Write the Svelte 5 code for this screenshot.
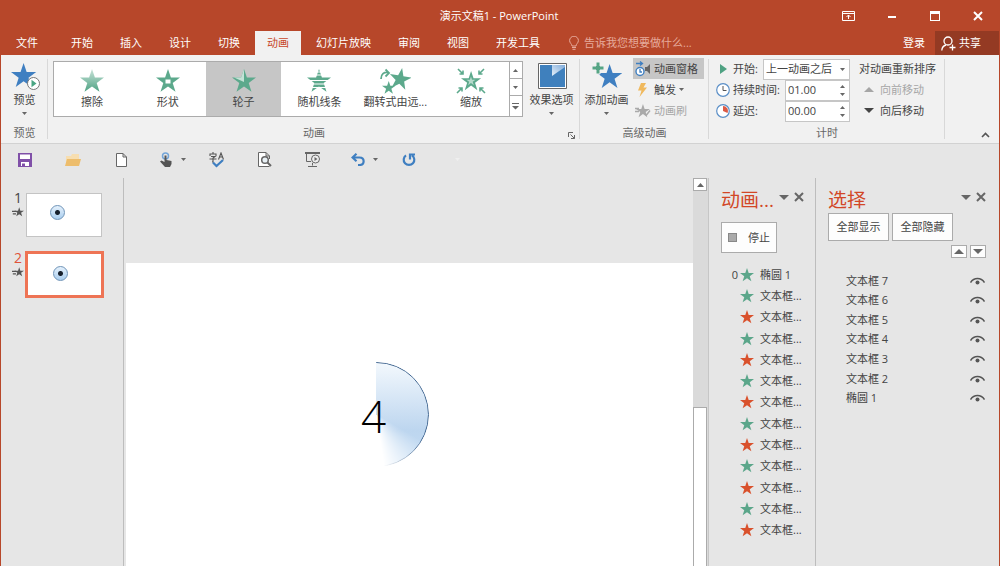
<script>
  const STAR = 'M12 0l2.9 8.6H24l-7.3 5.4 2.8 8.8L12 17.4 4.5 22.8 7.3 14 0 8.6h9.1z';

  const tabs = ['开始', '插入', '设计', '切换', '动画', '幻灯片放映', '审阅', '视图', '开发工具'];
  let activeTab = $state('动画');

  const effects = [
    { id: 'wipe', label: '擦除' },
    { id: 'shape', label: '形状' },
    { id: 'wheel', label: '轮子' },
    { id: 'bars', label: '随机线条' },
    { id: 'spin', label: '翻转式由远...' },
    { id: 'zoom', label: '缩放' }
  ];
  let effect = $state('wheel');

  let start = $state('上一动画之后');
  let duration = $state('01.00');
  let delay = $state('00.00');

  const slides = [1, 2];
  let activeSlide = $state(2);

  const timeline = [
    { order: '0', name: '椭圆 1', exit: false },
    ...Array.from({ length: 12 }, (_, i) => ({ order: '', name: '文本框...', exit: i % 2 === 1 }))
  ];

  const objects = ['文本框 7', '文本框 6', '文本框 5', '文本框 4', '文本框 3', '文本框 2', '椭圆 1'];
</script>

{#snippet star(size)}
  <svg width={size} height={size} viewBox="0 0 24 24" fill="currentColor" aria-hidden="true"><path d={STAR} /></svg>
{/snippet}

{#snippet caret(up = false)}
  <svg class="caret" width="5" height="3" viewBox="0 0 5 3" aria-hidden="true"><path d={up ? 'M0 3L2.5 0 5 3z' : 'M0 0h5L2.5 3z'} fill="#666" /></svg>
{/snippet}

{#snippet bigCaret(up = false)}
  <svg width="10" height="5" viewBox="0 0 10 5" aria-hidden="true"><path d={up ? 'M0 5L5 0l5 5z' : 'M0 0h10L5 5z'} fill="currentColor" /></svg>
{/snippet}

{#snippet cross()}
  <svg width="10" height="10" viewBox="0 0 10 10" fill="none" stroke="currentColor" stroke-width="2" aria-hidden="true"><path d="M1 1l8 8M9 1L1 9" /></svg>
{/snippet}

<div class="window">
  <header>
    <div class="titlebar">
      <h1>演示文稿1 - PowerPoint</h1>
      <div class="window-controls">
        <button aria-label="功能区显示选项">
          <svg width="13" height="10" viewBox="0 0 13 10" fill="none" stroke="#fff"><path d="M.5.5h12v9H.5zM.5 2.5h12M6.5 8V4M4.5 6l2-2 2 2" /></svg>
        </button>
        <button aria-label="最小化">
          <svg width="10" height="10" viewBox="0 0 10 10"><path d="M1 5h8v2H1z" fill="#fff" /></svg>
        </button>
        <button aria-label="最大化">
          <svg width="10" height="10" viewBox="0 0 10 10"><path d="M0 0h10v10H0zM1 3v6h8V3z" fill="#fff" fill-rule="evenodd" /></svg>
        </button>
        <button aria-label="关闭">{@render cross()}</button>
      </div>
    </div>

    <nav>
      <button class="tab file">文件</button>
      {#each tabs as tab}
        <button class="tab" class:active={tab === activeTab} onclick={() => (activeTab = tab)}>{tab}</button>
      {/each}
      <button class="tell-me">
        <svg width="10" height="14" viewBox="0 0 10 14" fill="none" stroke="currentColor"><path d="M3 10c0-2-2.4-3-2.4-5.400a4.400 4.400 0 0 1 8.800 0C9.400 7 7 8 7 10zM3 11.500h4M3.500 13.300h3" /></svg>
        告诉我您想要做什么...
      </button>
      <button class="login">登录</button>
      <button class="share">
        <svg width="15" height="15" viewBox="0 0 15 15" fill="none" stroke="#fff" stroke-width="1.300"><circle cx="7" cy="5" r="4" /><path d="M.8 14.500C1 11.500 2.600 9.600 5 9M8.500 11.500h6M11.500 8.500v6" /></svg>
        共享
      </button>
    </nav>
  </header>

  <section class="ribbon">
    <div class="group preview">
      <div class="group-body">
        <button class="big">
          <svg width="30" height="28" viewBox="0 0 30 28">
            <path d={STAR} fill="#3f7fc1" transform="translate(1 1) scale(1.050)" />
            <circle cx="23.500" cy="21.500" r="6" fill="#fff" stroke="#777" />
            <path d="M21.500 17.800v7.400l5-3.700z" fill="#4aa583" />
          </svg>
          <span>预览</span>
          {@render caret()}
        </button>
      </div>
      <div class="group-title">预览</div>
    </div>

    <div class="group animation">
      <div class="group-body">
        <div class="gallery">
          {#each effects as item}
            <button class="effect" class:selected={item.id === effect} onclick={() => (effect = item.id)}>
              <svg width="32" height="26" viewBox="0 0 32 26" fill="#5ca98c">
                {#if item.id === 'wipe'}
                  <defs>
                    <linearGradient id="wipe-fill" x2="0" y2="1">
                      <stop stop-color="#c9e3d9" />
                      <stop offset="1" stop-color="#4ea283" />
                    </linearGradient>
                  </defs>
                  <path d={STAR} fill="url(#wipe-fill)" transform="translate(4 1)" />
                {:else if item.id === 'shape'}
                  <path d={STAR} transform="translate(4 1)" />
                  <path d="M13.500 11.500h5v4h-5z" fill="#fff" />
                {:else if item.id === 'wheel'}
                  <path d={STAR} transform="translate(4 1)" />
                  <path d="M16 1v13l-10-4.400h7.100z" fill="#c3e2d6" />
                {:else if item.id === 'bars'}
                  <path d={STAR} transform="translate(4 1)" />
                  <path d="M4 4h24M4 7h24M4 12.500h24M4 16h24M4 19.500h24" stroke="#fff" stroke-width="1.200" />
                {:else if item.id === 'spin'}
                  <path d={STAR} transform="translate(10 0) rotate(10 12 12) scale(.920)" />
                  <path d={STAR} transform="translate(3 13) scale(.560)" />
                  <path d="M2 11C2 6 5 4 9 4.500M6.500 1.500L10 5 6.500 8.500" fill="none" stroke="#5ca98c" stroke-width="1.800" />
                {:else}
                  <path d={STAR} transform="translate(6 3) scale(.840)" />
                  <path d={STAR} fill="#b5dacb" transform="translate(11.400 8.500) scale(.380)" />
                  <path d="M3 1l5 5M8 2.500V6H4.500M29 1l-5 5M24 2.500V6h3.500M2 25l5-5M3.500 20H7v3.500M30 25l-5-5M28.500 20H25v3.500" fill="none" stroke="#5ca98c" stroke-width="1.600" />
                {/if}
              </svg>
              <span>{item.label}</span>
            </button>
          {/each}
          <div class="gallery-scroll">
            <button aria-label="上一行">{@render caret(true)}</button>
            <button aria-label="下一行">{@render caret()}</button>
            <button aria-label="其他">
              <svg width="7" height="7" viewBox="0 0 7 7"><path d="M0 0h7v1H0zM0 3h7L3.500 6.500z" fill="#666" /></svg>
            </button>
          </div>
        </div>
        <button class="big options">
          <svg width="30" height="28" viewBox="0 0 30 28">
            <defs>
              <linearGradient id="option-fill" x1="0" y1="1" x2="1" y2="0">
                <stop stop-color="#e6f0f9" />
                <stop offset="1" stop-color="#7fabda" />
              </linearGradient>
            </defs>
            <path d="M1.500 1.500h28v25h-28z" fill="#fff" stroke="#666" />
            <path d="M3 3h25v22H3z" fill="#3f80bd" />
            <path d="M15 3h13v2L15 14z" fill="url(#option-fill)" />
          </svg>
          <span>效果选项</span>
          {@render caret()}
        </button>
      </div>
      <div class="group-title">
        动画
        <button class="launcher" aria-label="动画设置">
          <svg width="7" height="7" viewBox="0 0 7 7" fill="none" stroke="#666"><path d="M.5 5V.5H5M2.500 2.500l4 4M6.500 3v3.500H3" /></svg>
        </button>
      </div>
    </div>

    <div class="group advanced">
      <div class="group-body">
        <button class="big">
          <svg width="30" height="28" viewBox="0 0 30 28">
            <path d={STAR} fill="#3f7fc1" transform="translate(5 2) scale(1.050)" />
            <path d="M4 0h4v4h4v4H8v4H4V8H0V4h4z" fill="#56a585" stroke="#f1f1f1" />
          </svg>
          <span>添加动画</span>
          {@render caret()}
        </button>
        <div class="rows">
          <button class="row pressed">
            <svg width="16" height="16" viewBox="0 0 16 16" fill="none">
              <circle cx="5" cy="10.500" r="4" fill="#fff" stroke="#3f7fc1" stroke-width="1.400" />
              <path d="M5 8v3h2M1 2.500h6M5 .5l2.500 2L5 4.500" stroke="#3f7fc1" stroke-width="1.300" />
              <path d="M10 6h2l3-3v10l-3-3h-2z" fill="#666" />
            </svg>
            动画窗格
          </button>
          <button class="row">
            <svg width="16" height="16" viewBox="0 0 16 16"><path d="M6 1h5L8.500 5.500H12L4.500 15 6.500 8.500H3z" fill="#f0b95d" /></svg>
            触发
            {@render caret()}
          </button>
          <button class="row" disabled>
            <svg width="16" height="16" viewBox="0 0 16 16" fill="#aaa"><path d={STAR} transform="translate(1 1) scale(.580)" /><path d="M0 5.500h4M0 8.500h4M11 12.500l4-5" stroke="#aaa" stroke-width="1.500" /></svg>
            动画刷
          </button>
        </div>
      </div>
      <div class="group-title">高级动画</div>
    </div>

    <div class="group timing">
      <div class="group-body">
        <div class="fields">
          <div class="field">
            <svg width="14" height="14" viewBox="0 0 14 14"><path d="M4 2v10l7-5z" fill="#4fa283" /></svg>
            <label for="start">开始:</label>
            <div class="select">
              <select id="start" bind:value={start}>
                <option>单击时</option>
                <option>与上一动画同时</option>
                <option>上一动画之后</option>
              </select>
              {@render caret()}
            </div>
          </div>
          <div class="field">
            <svg width="14" height="14" viewBox="0 0 14 14" fill="none"><circle cx="7" cy="7" r="6.300" fill="#fff" stroke="#5b8fc7" stroke-width="1.200" /><path d="M7 3v4.500h3.500" stroke="#555" /></svg>
            <label for="duration">持续时间:</label>
            <div class="spin">
              <input id="duration" type="text" bind:value={duration} />
              <div class="steps">
                <button aria-label="增加持续时间">{@render caret(true)}</button>
                <button aria-label="减少持续时间">{@render caret()}</button>
              </div>
            </div>
          </div>
          <div class="field">
            <svg width="14" height="14" viewBox="0 0 14 14" fill="none"><circle cx="7" cy="7" r="6.300" fill="#fff" stroke="#5b8fc7" stroke-width="1.200" /><path d="M7 7V2a5 5 0 0 1 4.500 7z" fill="#dc5a45" /></svg>
            <label for="delay">延迟:</label>
            <div class="spin">
              <input id="delay" type="text" bind:value={delay} />
              <div class="steps">
                <button aria-label="增加延迟">{@render caret(true)}</button>
                <button aria-label="减少延迟">{@render caret()}</button>
              </div>
            </div>
          </div>
        </div>
        <div class="reorder">
          <div class="reorder-title">对动画重新排序</div>
          <button disabled>{@render bigCaret(true)}向前移动</button>
          <button>{@render bigCaret()}向后移动</button>
        </div>
      </div>
      <div class="group-title">计时</div>
    </div>

    <button class="collapse" aria-label="折叠功能区">
      <svg width="9" height="6" viewBox="0 0 9 6" fill="none" stroke="#555" stroke-width="1.600"><path d="M1 5l3.500-3.500L8 5" /></svg>
    </button>
  </section>

  <div class="quick-access">
    <button aria-label="保存">
      <svg width="14" height="14" viewBox="0 0 14 14"><path d="M0 0h14v14H0z" fill="#8050a8" /><path d="M2 1.500h10V6H2zM3 9h8v4H3z" fill="#fff" /><path d="M4 10.500h3V13H4z" fill="#8050a8" /></svg>
    </button>
    <button aria-label="打开">
      <svg width="16" height="14" viewBox="0 0 16 14"><path d="M1 12V3h5l1-2h7v11z" fill="#f7deb0" /><path d="M0 13l2-7h14l-2 7z" fill="#edbd6c" /></svg>
    </button>
    <button aria-label="新建">
      <svg width="11" height="14" viewBox="0 0 11 14" fill="#fff" stroke="#666"><path d="M.5.5H7L10.500 4v9.500H.5zM7 .5V4h3.500" /></svg>
    </button>
    <button class="menu" aria-label="触摸/鼠标模式">
      <svg width="13" height="15" viewBox="0 0 13 15"><circle cx="5.500" cy="4" r="3" fill="none" stroke="#74a5d8" stroke-width="1.500" /><path d="M4.500 3.500h2V8l5 1v3l-1.500 3H5L0 9.500l1.500-1 3 1.500z" fill="#555" /></svg>
      {@render caret()}
    </button>
    <button aria-label="拼写检查">
      <svg width="16" height="16" viewBox="0 0 16 16" fill="none" stroke="#555" stroke-width="1.100"><path d="M4 0v2M1 4V2h6v2M2 4.500h4L4 6v4H3M.5 7h7M9.500 7.500L12 1l2.500 6.500M10.500 5h3" /><path d="M4 10.500l3.500 3.500L14 8" stroke="#3f7fc1" stroke-width="2.200" /></svg>
    </button>
    <button aria-label="打印预览">
      <svg width="14" height="15" viewBox="0 0 14 15" fill="none" stroke="#666"><path d="M11.500 14.500H.5V.5H8L11.500 4v3M8 .5V4h3.500" fill="#fff" /><circle cx="7" cy="8" r="3.300" fill="#e8f0f5" stroke-width="1.500" /><path d="M9.500 10.500l3.500 3.500" stroke-width="2" /></svg>
    </button>
    <button aria-label="从头开始放映">
      <svg width="16" height="15" viewBox="0 0 16 15" fill="none" stroke="#666"><path d="M0 1h15" stroke-width="2" /><path d="M1.500 2v7.500H6M7.500 11v2.500M3 14.500h9" /><circle cx="10.500" cy="7" r="4" fill="#eee" /><path d="M9.500 5v4l3-2z" fill="#666" stroke="none" /></svg>
    </button>
    <button class="menu" aria-label="撤消">
      <svg width="14" height="13" viewBox="0 0 14 13" fill="none" stroke="#3f7fc1" stroke-width="2.200"><path d="M5.500.8L1.500 4.500l4 3.700M2 4.500h6.500c5.500 0 5.500 7.500 0 7.500H7" /></svg>
      {@render caret()}
    </button>
    <button aria-label="重复">
      <svg width="14" height="14" viewBox="0 0 14 14" fill="none" stroke="#3f7fc1" stroke-width="2.200"><path d="M4 2.300a5.300 5.300 0 1 0 6 0M8 6.500V1.500h5" /></svg>
    </button>
    <button aria-label="自定义快速访问工具栏">
      <svg width="5" height="5" viewBox="0 0 5 5"><path d="M0 1h5L2.500 4z" fill="#efefef" /></svg>
    </button>
  </div>

  <main>
    <aside class="thumbs">
      {#each slides as n}
        <button class="thumb" class:current={n === activeSlide} onclick={() => (activeSlide = n)}>
          <span class="marker">
            <span class="number">{n}</span>
            <svg width="12" height="10" viewBox="0 0 30 24" fill="#555"><path d={STAR} transform="translate(6 0)" /><path d="M0 9h10v3H0zM2 15h8v3H2z" /></svg>
          </span>
          <span class="page"><span class="ball"></span></span>
        </button>
      {/each}
    </aside>

    <div class="canvas">
      <div class="slide">
        <div class="pie"></div>
        <div class="count">4</div>
      </div>
    </div>

    <div class="scrollbar">
      <button aria-label="向上滚动"><svg width="7" height="4" viewBox="0 0 7 4"><path d="M0 4L3.500 0 7 4z" fill="#666" /></svg></button>
      <div class="handle"></div>
    </div>

    <aside class="pane timeline">
      <div class="pane-head">
        <h2>动画...</h2>
        <button aria-label="窗格选项">{@render bigCaret()}</button>
        <button aria-label="关闭动画窗格">{@render cross()}</button>
      </div>
      <button class="boxed stop"><span class="square"></span>停止</button>
      <ol>
        {#each timeline as item}
          <li class:exit={item.exit}>
            <span class="order">{item.order}</span>
            {@render star(14)}
            <span>{item.name}</span>
          </li>
        {/each}
      </ol>
    </aside>

    <aside class="pane selection">
      <div class="pane-head">
        <h2>选择</h2>
        <button aria-label="窗格选项">{@render bigCaret()}</button>
        <button aria-label="关闭选择窗格">{@render cross()}</button>
      </div>
      <div class="toggle-all">
        <button class="boxed">全部显示</button>
        <button class="boxed">全部隐藏</button>
      </div>
      <div class="move">
        <button class="boxed" aria-label="上移一层">{@render bigCaret(true)}</button>
        <button class="boxed" aria-label="下移一层">{@render bigCaret()}</button>
      </div>
      <ul>
        {#each objects as name}
          <li>
            <span>{name}</span>
            <button aria-label="隐藏 {name}">
              <svg width="15" height="8" viewBox="0 0 15 8"><path d="M.5 5.500C4 .2 11 .2 14.500 5.500" fill="none" stroke="#555" stroke-width="1.500" /><circle cx="7.500" cy="5.500" r="2" fill="#555" /></svg>
            </button>
          </li>
        {/each}
      </ul>
    </aside>
  </main>
</div>

<style>
  :global(body) {
    margin: 0;
  }

  .window {
    display: flex;
    flex-direction: column;
    min-height: 100vh;
    box-sizing: border-box;
    border: 0 solid #b7472a;
    border-width: 0 1px;
    background: #e6e6e6;
    color: #444;
    font: 11px/16px "Open Sans", "Noto Sans CJK SC", sans-serif;
  }

  button,
  input,
  select {
    margin: 0;
    padding: 0;
    border: 0;
    background: none;
    color: inherit;
    font: inherit;
  }

  svg {
    display: block;
    flex: none;
  }

  h1,
  h2,
  ul,
  ol {
    margin: 0;
    padding: 0;
    font-weight: normal;
    list-style: none;
  }

  header {
    background: #b7472a;
    color: #fff;
  }

  .titlebar {
    display: grid;
    grid-template-columns: 1fr auto 1fr;
    align-items: center;
    height: 31px;
  }

  h1 {
    grid-column: 2;
    padding-right: 2px;
    font-size: 11px;
  }

  .window-controls {
    display: flex;
    justify-content: flex-end;
  }

  .window-controls button {
    display: flex;
    align-items: center;
    justify-content: center;
    width: 43px;
    height: 28px;
  }

  nav {
    display: flex;
    height: 24px;
  }

  .tab {
    padding: 0 12px;
    margin-right: 3px;
    white-space: nowrap;
  }

  .tab.file {
    padding: 0 18px 0 15px;
  }

  .tab.active {
    background: #f1f1f1;
    color: #c8482a;
  }

  .tell-me {
    display: flex;
    align-items: center;
    gap: 5px;
    margin-left: 14px;
    color: #e6aa9b;
    white-space: nowrap;
  }

  .login {
    margin-left: auto;
    padding: 0 10px;
  }

  .share {
    display: flex;
    align-items: center;
    gap: 3px;
    padding: 0 18px 0 6px;
    background: #943a23;
  }

  .ribbon {
    display: flex;
    height: 88px;
    background: #f1f1f1;
    border-bottom: 1px solid #d2d2d2;
  }

  .group {
    display: flex;
    flex-direction: column;
    position: relative;
  }

  .group::after {
    content: "";
    position: absolute;
    top: 4px;
    right: 0;
    bottom: 4px;
    width: 1px;
    background: #d8d8d8;
  }

  .group-body {
    display: flex;
    flex: 1;
  }

  .group-title {
    display: flex;
    justify-content: center;
    position: relative;
    height: 18px;
    color: #666;
  }

  .launcher {
    position: absolute;
    right: 5px;
    bottom: 4px;
  }

  .big {
    display: flex;
    flex-direction: column;
    align-items: center;
    padding-top: 7px;
    white-space: nowrap;
  }

  .big .caret {
    margin-top: 4px;
  }

  .big span {
    margin-top: 2px;
  }

  .preview {
    width: 47px;
  }

  .preview .big {
    width: 47px;
  }

  .animation {
    width: 532px;
  }

  .gallery {
    display: flex;
    flex: 1;
    margin: 6px 0 0 5px;
    height: 54px;
    border: 1px solid #ababab;
    background: #fff;
  }

  .effect {
    display: flex;
    flex: 1;
    flex-direction: column;
    align-items: center;
    padding-top: 6px;
    white-space: nowrap;
  }

  .effect.selected {
    background: #c6c6c6;
  }

  .gallery-scroll {
    display: grid;
    width: 12px;
    border-left: 1px solid #ababab;
  }

  .gallery-scroll button {
    display: grid;
    place-items: center;
  }

  .gallery-scroll button + button {
    border-top: 1px solid #ababab;
  }

  .options {
    width: 57px;
  }

  .advanced {
    width: 129px;
  }

  .advanced .big {
    width: 53px;
  }

  .row {
    display: flex;
    align-items: center;
    gap: 3px;
    width: 71px;
    height: 21px;
    padding-left: 2px;
    white-space: nowrap;
  }

  .rows {
    padding-top: 3px;
  }

  .row.pressed {
    background: #c6c6c6;
  }

  button:disabled {
    color: #a6a6a6;
  }

  .timing {
    width: 236px;
  }

  .timing .group-body {
    padding: 4px 8px 0 7px;
    justify-content: space-between;
  }

  .fields {
    display: grid;
    align-content: start;
    width: 134px;
    gap: 1px;
  }

  .field {
    display: flex;
    align-items: center;
    gap: 3px;
    height: 20px;
    white-space: nowrap;
  }

  .select,
  .spin {
    display: flex;
    align-items: center;
    box-sizing: border-box;
    margin-left: auto;
    height: 21px;
    border: 1px solid #c6c6c6;
    background: #fff;
  }

  .select {
    position: relative;
    width: 87px;
  }

  .select select {
    appearance: none;
    width: 100%;
    padding-left: 2px;
  }

  .select .caret {
    position: absolute;
    right: 4px;
    pointer-events: none;
  }

  .spin {
    width: 65px;
  }

  .spin input {
    flex: 1;
    min-width: 0;
    padding-left: 2px;
    font-size: 11px;
  }

  .steps {
    display: grid;
    gap: 5px;
    padding-right: 4px;
  }

  .reorder {
    width: 78px;
    white-space: nowrap;
  }

  .reorder-title {
    line-height: 20px;
  }

  .reorder button {
    display: flex;
    align-items: center;
    gap: 6px;
    height: 21px;
    padding-left: 5px;
  }

  .collapse {
    margin: auto 9px 5px auto;
  }

  .quick-access {
    display: grid;
    grid-template-columns: repeat(10, 48px);
    height: 34px;
  }

  .quick-access button {
    display: flex;
    align-items: center;
    justify-content: center;
    padding-bottom: 3px;
  }

  .quick-access .menu {
    gap: 8px;
    padding-left: 7px;
  }

  main {
    display: flex;
    flex: 1;
  }

  .thumbs {
    display: flex;
    flex-direction: column;
    gap: 13px;
    width: 111px;
    padding: 13px 0 0 11px;
    border-right: 1px solid #bdbdbd;
  }

  .thumb {
    display: flex;
    align-items: flex-start;
    gap: 1px;
    height: 47px;
  }

  .marker {
    display: flex;
    flex-direction: column;
    align-items: center;
    width: 12px;
    gap: 2px;
  }

  .number {
    font-size: 14px;
    line-height: 14px;
  }

  .page {
    box-sizing: border-box;
    width: 76px;
    height: 44px;
    margin: 2px 1px;
    padding: 11px 0 0 23px;
    border: 1px solid #c4c4c4;
    background: #fff;
  }

  .ball {
    display: block;
    box-sizing: border-box;
    width: 15px;
    height: 15px;
    border: 1px solid #6f94b8;
    border-radius: 50%;
    background: radial-gradient(circle, #17202c 2px, transparent 3px), linear-gradient(#e5f1fc, #a9cdee);
  }

  .current .number {
    color: #e0533a;
  }

  .current .page {
    width: 79px;
    height: 47px;
    margin: 0;
    padding: 12px 0 0 25px;
    border: 3px solid #ee7455;
  }

  .canvas {
    display: flex;
    flex: 1;
    padding: 85px 0 0 2px;
  }

  .slide {
    position: relative;
    flex: 1;
    overflow: hidden;
    background: #fff;
  }

  .pie {
    position: absolute;
    left: 198px;
    top: 99px;
    box-sizing: border-box;
    width: 105px;
    height: 105px;
    border: 1px solid #3f648f;
    border-radius: 50%;
    background: linear-gradient(#f3f8fd, #bdd6ef 65%, #c5ddf4);
    mask: conic-gradient(#000 120deg, transparent 172deg);
  }

  .count {
    position: absolute;
    left: 235px;
    top: 123px;
    color: #000;
    font-size: 44px;
    font-weight: 300;
    line-height: 60px;
  }

  .scrollbar {
    display: flex;
    flex-direction: column;
    width: 15px;
    background: #dadada;
    border-right: 1px solid #c6c6c6;
  }

  .scrollbar button {
    display: grid;
    place-items: center;
    width: 14px;
    height: 13px;
    border: 1px solid #ababab;
    background: #fff;
  }

  .handle {
    flex: 1;
    width: 12px;
    margin-top: 216px;
    border: 1px solid #ababab;
    border-bottom: 0;
    background: #fff;
  }

  .pane {
    box-sizing: border-box;
    padding: 10px 12px 0;
  }

  .timeline {
    width: 107px;
    border-right: 1px solid #bdbdbd;
  }

  .selection {
    width: 183px;
    padding-right: 13px;
  }

  .pane-head {
    display: flex;
    align-items: flex-start;
    gap: 5px;
    height: 25px;
    white-space: nowrap;
  }

  .pane-head button {
    display: grid;
    place-items: center;
    height: 18px;
    color: #666;
  }

  .pane-head h2 {
    flex: 1;
    color: #d24726;
    font-size: 19px;
    line-height: 24px;
  }

  .boxed {
    display: flex;
    align-items: center;
    justify-content: center;
    box-sizing: border-box;
    border: 1px solid #ababab;
    background: #fdfdfd;
    white-space: nowrap;
  }

  .stop {
    gap: 11px;
    width: 56px;
    height: 31px;
    margin-top: 9px;
  }

  .square {
    width: 7px;
    height: 7px;
    border: 1px solid #888;
    background: #aaa;
  }

  ol,
  ul {
    display: grid;
    grid-auto-rows: 1fr;
  }

  ol {
    height: 277px;
    margin-top: 11px;
  }

  li {
    display: flex;
    align-items: center;
    white-space: nowrap;
  }

  ol li {
    gap: 6px;
  }

  ol svg {
    color: #5ba68a;
    margin-left: -4px;
  }

  .exit svg {
    color: #d9512c;
  }

  .order {
    width: 17px;
    text-align: right;
  }

  .toggle-all {
    display: flex;
    gap: 3px;
  }

  .toggle-all .boxed {
    width: 61px;
    height: 28px;
  }

  .move {
    display: flex;
    justify-content: flex-end;
    gap: 3px;
    margin-top: 4px;
  }

  .move .boxed {
    width: 16px;
    height: 13px;
    color: #666;
  }

  ul {
    height: 137px;
    margin-top: 13px;
    padding: 0 1px 0 18px;
  }

  ul li {
    justify-content: space-between;
  }
</style>
